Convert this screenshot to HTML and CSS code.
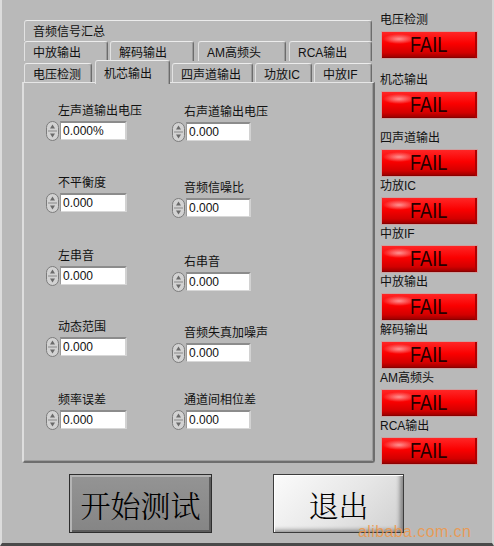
FILE: index.html
```html
<!DOCTYPE html>
<html lang="zh-CN">
<head>
<meta charset="utf-8">
<title>音频信号测试</title>
<link rel="stylesheet" href="styles.css">
</head>
<body>
<div class="window">
  <div class="main">
    <div class="tabctl">
      <div class="tabrow r1">
        <div class="tab t-sum">音频信号汇总</div>
      </div>
      <div class="tabrow r2">
        <div class="tab t21">中放输出</div>
        <div class="tab t22">解码输出</div>
        <div class="tab t23">AM高频头</div>
        <div class="tab t24">RCA输出</div>
      </div>
      <div class="tabrow r3">
        <div class="tab t31">电压检测</div>
        <div class="tab t32 sel">机芯输出</div>
        <div class="tab t33">四声道输出</div>
        <div class="tab t34">功放IC</div>
        <div class="tab t35">中放IF</div>
      </div>
      <div class="panel">
        <div class="col col-l">
          <div class="field f1">
            <div class="flabel">左声道输出电压</div>
            <div class="ctrl"><svg class="spin" width="13" height="20" viewBox="0 0 13 20"><rect x="0.5" y="0.5" width="12" height="19" rx="6" fill="#d2d2d2" stroke="#7c7c7c"/><path d="M2 10h9" stroke="#8a8a8a"/><path d="M6.5 3.5 9 7.5H4Z" fill="#6a6a6a"/><path d="M6.5 16.5 9 12.5H4Z" fill="#6a6a6a"/></svg><div class="box">0.000%</div></div>
          </div>
          <div class="field f2">
            <div class="flabel">不平衡度</div>
            <div class="ctrl"><svg class="spin" width="13" height="20" viewBox="0 0 13 20"><rect x="0.5" y="0.5" width="12" height="19" rx="6" fill="#d2d2d2" stroke="#7c7c7c"/><path d="M2 10h9" stroke="#8a8a8a"/><path d="M6.5 3.5 9 7.5H4Z" fill="#6a6a6a"/><path d="M6.5 16.5 9 12.5H4Z" fill="#6a6a6a"/></svg><div class="box">0.000</div></div>
          </div>
          <div class="field f3">
            <div class="flabel">左串音</div>
            <div class="ctrl"><svg class="spin" width="13" height="20" viewBox="0 0 13 20"><rect x="0.5" y="0.5" width="12" height="19" rx="6" fill="#d2d2d2" stroke="#7c7c7c"/><path d="M2 10h9" stroke="#8a8a8a"/><path d="M6.5 3.5 9 7.5H4Z" fill="#6a6a6a"/><path d="M6.5 16.5 9 12.5H4Z" fill="#6a6a6a"/></svg><div class="box">0.000</div></div>
          </div>
          <div class="field f4">
            <div class="flabel">动态范围</div>
            <div class="ctrl"><svg class="spin" width="13" height="20" viewBox="0 0 13 20"><rect x="0.5" y="0.5" width="12" height="19" rx="6" fill="#d2d2d2" stroke="#7c7c7c"/><path d="M2 10h9" stroke="#8a8a8a"/><path d="M6.5 3.5 9 7.5H4Z" fill="#6a6a6a"/><path d="M6.5 16.5 9 12.5H4Z" fill="#6a6a6a"/></svg><div class="box">0.000</div></div>
          </div>
          <div class="field f5">
            <div class="flabel">频率误差</div>
            <div class="ctrl"><svg class="spin" width="13" height="20" viewBox="0 0 13 20"><rect x="0.5" y="0.5" width="12" height="19" rx="6" fill="#d2d2d2" stroke="#7c7c7c"/><path d="M2 10h9" stroke="#8a8a8a"/><path d="M6.5 3.5 9 7.5H4Z" fill="#6a6a6a"/><path d="M6.5 16.5 9 12.5H4Z" fill="#6a6a6a"/></svg><div class="box">0.000</div></div>
          </div>
        </div>
        <div class="col col-r">
          <div class="field f1">
            <div class="flabel">右声道输出电压</div>
            <div class="ctrl"><svg class="spin" width="13" height="20" viewBox="0 0 13 20"><rect x="0.5" y="0.5" width="12" height="19" rx="6" fill="#d2d2d2" stroke="#7c7c7c"/><path d="M2 10h9" stroke="#8a8a8a"/><path d="M6.5 3.5 9 7.5H4Z" fill="#6a6a6a"/><path d="M6.5 16.5 9 12.5H4Z" fill="#6a6a6a"/></svg><div class="box">0.000</div></div>
          </div>
          <div class="field f2">
            <div class="flabel">音频信噪比</div>
            <div class="ctrl"><svg class="spin" width="13" height="20" viewBox="0 0 13 20"><rect x="0.5" y="0.5" width="12" height="19" rx="6" fill="#d2d2d2" stroke="#7c7c7c"/><path d="M2 10h9" stroke="#8a8a8a"/><path d="M6.5 3.5 9 7.5H4Z" fill="#6a6a6a"/><path d="M6.5 16.5 9 12.5H4Z" fill="#6a6a6a"/></svg><div class="box">0.000</div></div>
          </div>
          <div class="field f3">
            <div class="flabel">右串音</div>
            <div class="ctrl"><svg class="spin" width="13" height="20" viewBox="0 0 13 20"><rect x="0.5" y="0.5" width="12" height="19" rx="6" fill="#d2d2d2" stroke="#7c7c7c"/><path d="M2 10h9" stroke="#8a8a8a"/><path d="M6.5 3.5 9 7.5H4Z" fill="#6a6a6a"/><path d="M6.5 16.5 9 12.5H4Z" fill="#6a6a6a"/></svg><div class="box">0.000</div></div>
          </div>
          <div class="field f4">
            <div class="flabel">音频失真加噪声</div>
            <div class="ctrl"><svg class="spin" width="13" height="20" viewBox="0 0 13 20"><rect x="0.5" y="0.5" width="12" height="19" rx="6" fill="#d2d2d2" stroke="#7c7c7c"/><path d="M2 10h9" stroke="#8a8a8a"/><path d="M6.5 3.5 9 7.5H4Z" fill="#6a6a6a"/><path d="M6.5 16.5 9 12.5H4Z" fill="#6a6a6a"/></svg><div class="box">0.000</div></div>
          </div>
          <div class="field f5">
            <div class="flabel">通道间相位差</div>
            <div class="ctrl"><svg class="spin" width="13" height="20" viewBox="0 0 13 20"><rect x="0.5" y="0.5" width="12" height="19" rx="6" fill="#d2d2d2" stroke="#7c7c7c"/><path d="M2 10h9" stroke="#8a8a8a"/><path d="M6.5 3.5 9 7.5H4Z" fill="#6a6a6a"/><path d="M6.5 16.5 9 12.5H4Z" fill="#6a6a6a"/></svg><div class="box">0.000</div></div>
          </div>
        </div>
      </div>
    </div>
    <div class="status">
      <div class="item i1"><div class="slabel">电压检测</div><div class="fail"><span>FAIL</span></div></div>
      <div class="item i2"><div class="slabel">机芯输出</div><div class="fail"><span>FAIL</span></div></div>
      <div class="item i3"><div class="slabel">四声道输出</div><div class="fail"><span>FAIL</span></div></div>
      <div class="item"><div class="slabel">功放IC</div><div class="fail"><span>FAIL</span></div></div>
      <div class="item"><div class="slabel">中放IF</div><div class="fail"><span>FAIL</span></div></div>
      <div class="item"><div class="slabel">中放输出</div><div class="fail"><span>FAIL</span></div></div>
      <div class="item"><div class="slabel">解码输出</div><div class="fail"><span>FAIL</span></div></div>
      <div class="item"><div class="slabel">AM高频头</div><div class="fail"><span>FAIL</span></div></div>
      <div class="item"><div class="slabel">RCA输出</div><div class="fail"><span>FAIL</span></div></div>
    </div>
  </div>
  <div class="buttons">
    <div class="btn btn-start">开始测试</div>
    <div class="btn btn-exit">退出</div>
  </div>
  <div class="watermark">alibaba.com.cn</div>
</div>
</body>
</html>
```
FILE: styles.css
```css
* { box-sizing: border-box; }
html, body { margin: 0; padding: 0; background: #b9b9b9; }
body {
  font-family: "Liberation Sans", "Noto Sans CJK SC", sans-serif;
  font-size: 12px;
  color: #111;
}
.window {
  position: relative;
  width: 494px;
  height: 546px;
  background: #b9b9b9;
  border-left: 2px solid #dcdcdc;
  border-right: 2px solid #d4d4d4;
  border-bottom: 3px solid #4a4a4a;
  overflow: hidden;
}
.main { display: flex; align-items: flex-start; }

/* tab control */
.tabctl { width: 353px; margin-left: 20px; margin-top: 20px; }
.tabrow { display: flex; position: relative; }
.r1 { height: 21px; }
.r2 { height: 20px; }
.r3 { height: 21px; z-index: 2; }
.tab {
  height: 100%;
  padding: 2px 0 0 8px;
  line-height: 18px;
  white-space: nowrap;
  background: #bababa;
  border-top: 1px solid #ececec;
  border-left: 1px solid #e2e2e2;
  border-right: 1px solid #6c6c6c;
  box-shadow: inset -1px 0 0 #9a9a9a;
  border-radius: 3px 3px 0 0;
}
.t-sum { width: 348px; margin-left: 2px; }
.t21 { width: 84px; margin-left: 2px; }
.t22 { width: 84px; margin-left: 2px; }
.t23 { width: 88px; margin-left: 4px; }
.t24 { width: 83px; margin-left: 3px; }
.r3 .tab { height: 19px; margin-top: 2px; }
.t31 { width: 68px; margin-left: 2px; }
.t32 { width: 75px; margin-left: 3px; }
.t33 { width: 81px; margin-left: 2px; }
.t34 { width: 57px; margin-left: 2px; }
.t35 { width: 58px; margin-left: 2px; }
.r3 .tab.sel {
  height: 24px;
  margin-top: -1px;
  padding-top: 4px;
  background: #b9b9b9;
  position: relative;
  z-index: 3;
}

.panel {
  position: relative;
  z-index: 1;
  display: flex;
  height: 381px;
  background: #b9b9b9;
  border-top: 1px solid #e6e6e6;
  border-left: 2px solid #dedede;
  border-right: 2px solid #6e6e6e;
  border-bottom: 2px solid #6e6e6e;
  border-radius: 0 0 3px 3px;
  box-shadow: inset -1px -1px 0 #9c9c9c;
}
.col { display: flex; flex-direction: column; }
.col-l { margin-left: 22px; width: 126px; }
.col-r { width: 120px; }
.field { height: 37px; }
.flabel { line-height: 16px; height: 16px; margin-bottom: 2px; padding-left: 12px; white-space: nowrap; }
.ctrl { display: flex; align-items: center; height: 19px; }
.spin { flex: none; margin-right: 1px; }
.box {
  height: 19px;
  width: 67px;
  background: #fff;
  border-top: 2px solid #8c8c8c;
  border-left: 1px solid #9a9a9a;
  border-right: 2px solid #d2d2d2;
  border-bottom: 1px solid #d8d8d8;
  padding-left: 2px;
  line-height: 16px;
  font-size: 12px;
  color: #111;
}
.col-r .box { width: 65px; }
.col-l .f1 { margin-top: 20px; }
.col-l .f2 { margin-top: 35px; }
.col-l .f3 { margin-top: 36px; }
.col-l .f4 { margin-top: 34px; }
.col-l .f5 { margin-top: 36px; }
.col-r .f1 { margin-top: 21px; }
.col-r .f2 { margin-top: 39px; }
.col-r .f3 { margin-top: 37px; }
.col-r .f4 { margin-top: 34px; }
.col-r .f5 { margin-top: 30px; }

/* status column */
.status { margin-left: 3px; width: 102px; display: flex; flex-direction: column; }
.item { height: 48px; }
.i1 { margin-top: 11px; }
.i2 { margin-top: 12px; }
.i3 { margin-top: 10px; }
.slabel { line-height: 18px; height: 18px; padding-left: 2px; white-space: nowrap; }
.fail {
  margin: 2px 0 0 3px;
  width: 97px;
  height: 28px;
  border: 1px solid #caa2a2;
  background:
    radial-gradient(ellipse 16px 5px at 17px 7px, rgba(255,190,190,0.75), rgba(255,60,60,0)),
    linear-gradient(to bottom, #ff2626 0%, #fa0000 45%, #d20000 80%, #940000 100%);
  box-shadow: inset -2px 0 0 #b00000, inset 0 -1px 0 #8a0000;
  display: flex;
  align-items: center;
  justify-content: center;
}
.fail span {
  display: inline-block;
  font-family: "Liberation Sans", sans-serif;
  font-size: 22px;
  line-height: 24px;
  color: #260000;
  transform: scaleX(0.82);
  margin-left: -2px;
}

/* buttons */
.buttons { display: flex; margin-top: 9px; }
.btn {
  height: 59px;
  display: flex;
  align-items: center;
  justify-content: center;
  font-family: "Noto Serif CJK SC", "Noto Sans CJK SC", serif;
  font-weight: 300;
  font-size: 30px;
  color: #000;
}
.btn-start {
  margin-left: 67px;
  width: 143px;
  background: linear-gradient(to bottom, #949494, #858585);
  border: 1px solid #2e2e2e;
  box-shadow: inset 2px 2px 0 #b4b4b4, inset -2px -2px 0 #5c5c5c;
}
.btn-exit {
  margin-left: 61px;
  width: 131px;
  background: linear-gradient(135deg, #fbfbfb 0%, #e6e6e6 55%, #cfcfcf 100%);
  border: 1px solid #3c3c3c;
  box-shadow: inset 1px 1px 0 #ffffff, inset -4px -3px 4px -1px rgba(0,0,0,0.4);
}

.watermark {
  position: absolute;
  left: 356px;
  top: 523px;
  font-family: "Liberation Sans", sans-serif;
  font-size: 16px;
  letter-spacing: 0.4px;
  color: rgba(240, 150, 70, 0.85);
  white-space: nowrap;
}
```
